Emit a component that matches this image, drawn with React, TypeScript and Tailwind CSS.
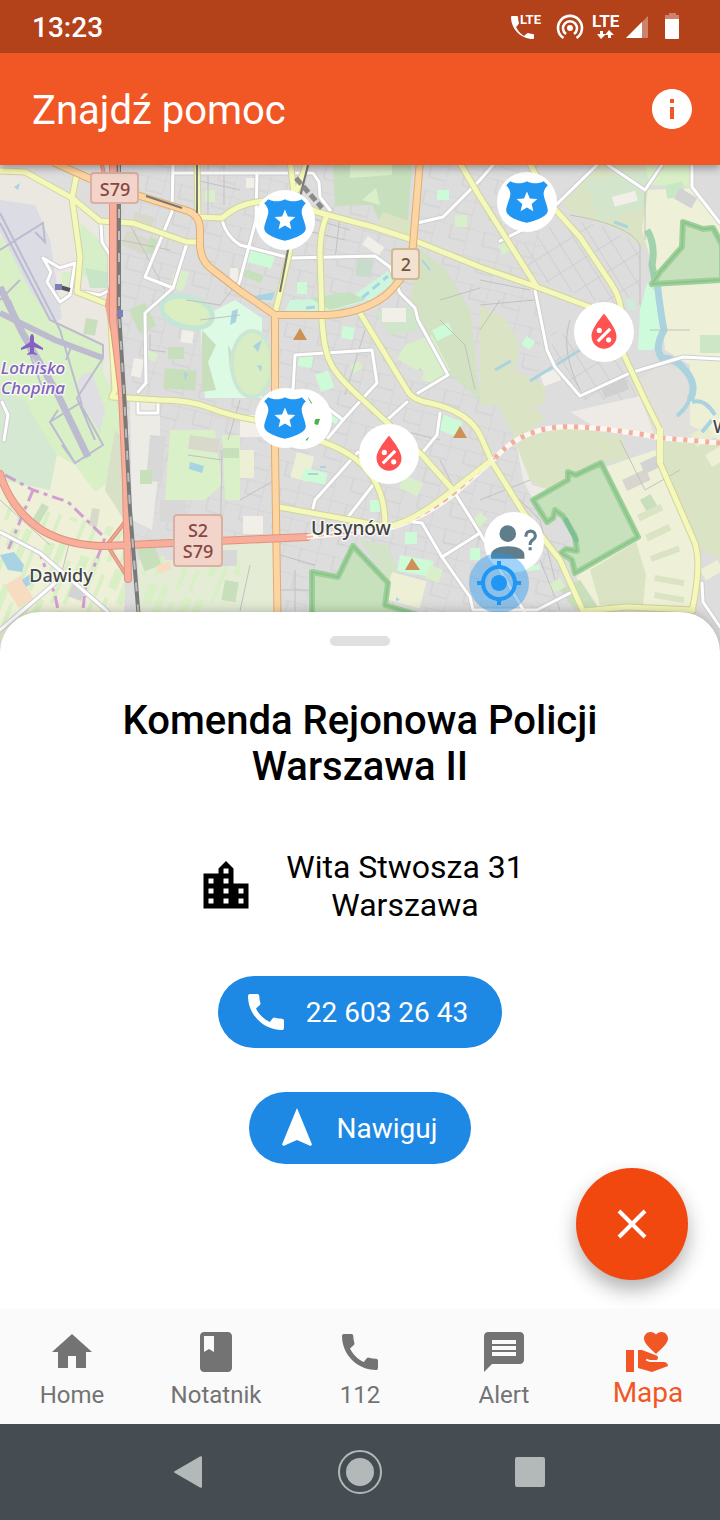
import React from 'react';
import {
  MdBook,
  MdCall,
  MdHome,
  MdInfo,
  MdLocationCity,
  MdMessage,
  MdNavigation,
  MdVolunteerActivism,
} from 'react-icons/md';
import { IconType } from 'react-icons';

// Road geometry, drawn as casing + fill
const WHITE_ROADS = [
  'M173 165L172 212L145 277L173 288L187 243',
  'M173 288L145 313L146 383L138 392',
  'M173 173H313L319 182L320 197L330 210',
  'M222 220Q226 236 240 245L290 258L375 256L390 267L400 293L415 308L418 320L448 375L418 393',
  'M101 223L102 242L110 255V290L100 295L83 292',
  'M43 258L60 268L75 263L70 295L60 302L47 282L51 272Z',
  'M257 173L256 220L240 280L236 292',
  'M417 223L443 217L480 180L493 165',
  'M293 390L295 355L372 350L377 383L363 398L343 420L328 438',
  'M597 165L558 203L522 230L500 241',
  'M608 165L645 190L662 165',
  'M692 165V187L720 223',
  'M535 290L547 350L555 367L580 396L630 373L683 357L720 359',
  'M313 508L315 500L358 452',
  'M348 517L373 485L387 475',
  'M387 420L407 402',
  'M343 420L320 402',
  'M440 413L437 435L422 453',
  'M413 522L422 523L442 557L470 597L473 610H537L570 593',
  'M453 490L480 533L442 557',
  'M480 533L500 570L524 611',
  'M0 532L40 553L107 611L130 640',
  'M55 583L0 630',
  'M702 583L703 602L720 627',
  'M2 402L8 415L4 440',
  'M138 402V413H158V402',
];

const YELLOW_ROADS = [
  'M0 171L25 172L72 198L100 221L133 223L187 242H200',
  'M77 173L72 198L80 257L77 292L110 305L115 390L112 397L160 400Q190 400 210 408T260 421L290 432Q330 442 350 455Q385 478 385 524',
  'M197 160L198 217L222 218Q238 204 257 202Q290 196 317 212L373 227L413 240L480 267L537 287L590 307',
  'M290 160L294 193L290 250L280 293L275 313',
  'M308 160L297 190',
  'M327 215Q320 230 320 253L322 320Q324 350 330 362Q336 376 363 400L422 455L453 490',
  'M360 313L407 390Q412 400 430 403Q470 412 481 437L492 462L523 512L560 560L583 611L595 640',
  'M387 527Q412 523 452 491L492 460',
  'M279 507L350 520L387 527',
  'M458 160L480 197L537 287',
  'M528 160L553 207L580 237L612 285Q622 300 622 320L623 353L645 400L660 430V463L695 543Q702 565 692 611',
  'M583 611L627 607L693 610',
];

const ORANGE_ROADS = [
  'M275 315L275 393L275 450L278 650',
  'M55 163L93 180L143 197L188 211Q199 215 200 228V246Q201 262 213 270L240 291L275 315H325Q360 314 385 296Q410 274 413 245L420 160',
];

const MOTORWAYS = [
  'M113 160V320L122 393L126 483L128 579',
  'M0 474Q11 510 43 531Q70 546 105 546L173 543L240 540L307 537',
];

const RESERVES = [
  'M533 500L568 480V472L576 475L601 463L638 537L575 573L572 560L561 553L566 549L577 551L575 536L563 516L555 510L553 518L547 522Z',
  'M312 660V572L338 577L353 546L388 583L385 605L425 617V660Z',
  'M683 222L703 229L713 228L722 245V280L652 284L660 272L682 247Z',
];

const TAXIWAYS =
  'M0 250L43 223L45 242L35 232M0 223L50 320L103 345V358L77 398L95 440M0 213L60 330L82 405M0 300L20 280M50 422L80 403L103 445L75 463ZM58 410L50 422M75 463L62 445M72 345L66 360M10 300L45 395';

// Small land use blocks: x, y, width, height, rotation, colour
const PATCHES: [number, number, number, number, number, string][] = [
  [150, 237, 12, 16, 20, '#c8dfbc'], [176, 268, 14, 20, 20, '#d9efc9'], [128, 230, 24, 16, 25, '#d8d9cb'],
  [135, 212, 20, 10, 15, '#d8d9cb'], [129, 310, 18, 26, -25, '#c8dfbc'], [168, 347, 16, 12, 0, '#c8dfbc'],
  [165, 368, 32, 20, 5, '#c8dfbc'], [134, 358, 10, 18, 10, '#f2efe9'], [182, 330, 12, 12, 8, '#f2efe9'],
  [147, 350, 12, 8, 20, '#d9efc9'], [205, 190, 10, 12, 0, '#d9efc9'], [230, 268, 8, 14, 0, '#f2efe9'],
  [246, 178, 10, 10, 0, '#f2efe9'], [250, 248, 26, 14, 16, '#cdfbd8'], [243, 268, 22, 8, 20, '#c8dfbc'],
  [297, 282, 10, 12, 0, '#cdfbd8'], [357, 258, 16, 18, 5, '#c8dccb'], [368, 236, 20, 10, 35, '#f2efe9'],
  [382, 308, 24, 14, 0, '#f2efe9'], [343, 326, 12, 12, 10, '#cdfbd8'], [300, 352, 14, 14, 10, '#cdfbd8'],
  [315, 375, 14, 18, -20, '#cdfbd8'], [350, 366, 10, 8, -30, '#d9efc9'], [432, 330, 18, 12, -25, '#cdfbd8'],
  [405, 345, 24, 16, 30, '#d9efc9'], [425, 370, 16, 10, 20, '#d9efc9'], [500, 215, 12, 10, -20, '#d9efc9'],
  [498, 246, 12, 10, -30, '#d9efc9'], [455, 215, 12, 12, 0, '#d9efc9'], [437, 190, 12, 10, 0, '#cdfbd8'],
  [527, 336, 10, 10, 35, '#cdfbd8'], [540, 375, 18, 12, -20, '#f2efe9'], [600, 300, 16, 8, 20, '#c8dfbc'],
  [627, 298, 8, 12, 0, '#cdebd8'], [600, 385, 26, 14, -20, '#d0d0d0'], [240, 415, 22, 22, 0, '#f2efe9'],
  [240, 450, 14, 28, 0, '#eef0d5'], [243, 516, 20, 18, 0, '#f2efe9'], [297, 452, 18, 26, 15, '#eef0d5'],
  [304, 468, 24, 12, 12, '#cdfbd8'], [330, 408, 14, 10, 35, '#cdfbd8'], [444, 415, 20, 16, 20, '#cdfbd8'],
  [405, 475, 20, 14, 25, '#d9efc9'], [370, 500, 10, 12, 0, '#cdfbd8'], [405, 532, 12, 12, 0, '#cdfbd8'],
  [400, 555, 34, 16, 10, '#cdfbd8'], [392, 572, 36, 28, 15, '#eef0d5'], [430, 565, 14, 14, 20, '#d9efc9'],
  [470, 548, 10, 12, 0, '#cdfbd8'], [480, 512, 10, 12, 40, '#d9efc9'], [548, 585, 14, 10, -30, '#d9efc9'],
  [500, 570, 40, 5, -8, '#cdfbd8'], [150, 435, 16, 46, 5, '#d8d8d8'], [190, 435, 30, 14, 8, '#d8d9cb'],
  [223, 448, 16, 10, 0, '#c8dfbc'], [140, 470, 12, 14, 0, '#c8dfbc'], [135, 545, 18, 28, -20, '#c8dfbc'],
  [160, 500, 26, 22, 0, '#d8d8d8'], [215, 550, 22, 16, 0, '#d8d8d8'], [225, 580, 14, 20, 10, '#c8dfbc'],
  [156, 566, 14, 8, -20, '#f8dcc2'], [42, 503, 8, 20, 30, '#c8dfbc'], [92, 508, 8, 18, 10, '#d8d9cb'],
  [5, 585, 18, 26, -30, '#f8dcc2'], [72, 585, 14, 12, 20, '#d3d3d3'], [640, 500, 12, 14, -30, '#c8dfbc'],
  [622, 480, 26, 12, -25, '#d8d5d0'], [640, 463, 18, 12, -25, '#d3d3d3'], [637, 515, 26, 7, -25, '#dae4c5'],
  [645, 535, 26, 7, -25, '#dae4c5'], [650, 556, 30, 6, -20, '#dae4c5'], [655, 575, 30, 6, 10, '#dae4c5'],
  [655, 592, 30, 6, 10, '#dae4c5'], [690, 435, 20, 14, -30, '#e8edcf'], [705, 455, 20, 14, -30, '#eef0d5'],
  [700, 570, 20, 12, -30, '#eef0d5'], [665, 185, 18, 14, -10, '#c9e6c5'], [700, 335, 20, 18, 0, '#cde6c5'],
  [680, 188, 20, 12, 30, '#d3d3d3'], [612, 197, 24, 10, -15, '#f2efe9'], [683, 262, 14, 10, 20, '#d4ecc0'],
  [86, 318, 12, 16, 10, '#c8dfbc'], [96, 178, 14, 14, 20, '#cfe8cf'], [62, 272, 10, 14, 0, '#d9efc9'],
];

const BLUE_WATER = [
  'M0 555L14 552L24 565L22 572L8 570Z', 'M22 580L30 574L34 582L26 587Z', 'M190 462L204 466L202 473L189 469Z',
  'M232 311L238 309L236 322L230 325Z', 'M14 187L20 183L18 190Z', 'M254 296L275 292L272 300L258 300Z',
  'M185 381L188 374L184 372', 'M253 346L262 340L258 352Z', 'M257 365L262 366L261 372Z', 'M396 597L400 600L396 601Z',
];

const Casing: React.FC<{ paths: string[]; edge: string; fill: string; width: number }> = ({ paths, edge, fill, width }) => (
  <g fill="none" strokeLinejoin="round" strokeLinecap="round">
    {paths.map((d) => <path key={`e${d}`} d={d} stroke={edge} strokeWidth={width + 2} />)}
    {paths.map((d) => <path key={d} d={d} stroke={fill} strokeWidth={width} />)}
  </g>
);

const POLICE_PATH =
  'M22 4L20 2C18.85 2.64 17.4 3 16 3C14.6 3 13.14 2.63 12 2C10.86 2.63 9.4 3 8 3C6.6 3 5.15 2.64 4 2L2 4C2 4 4 6 4 8S2 14 2 16C2 20 12 22 12 22S22 20 22 16C22 14 20 10 20 8S22 4 22 4M15.05 16.45L11.97 14.59L8.9 16.45L9.72 12.95L7 10.61L10.58 10.3L11.97 7L13.37 10.29L16.95 10.6L14.23 12.94L15.05 16.45Z';
const BLOOD_PATH =
  'M12 3.25C12 3.25 6 10 6 14C6 17.32 8.69 20 12 20A6 6 0 0 0 18 14C18 10 12 3.25 12 3.25M14.47 9.97L15.53 11.03L9.53 17.03L8.47 15.97M9.75 10A1.25 1.25 0 0 1 11 11.25A1.25 1.25 0 0 1 9.75 12.5A1.25 1.25 0 0 1 8.5 11.25A1.25 1.25 0 0 1 9.75 10M14.25 14.5A1.25 1.25 0 0 1 15.5 15.75A1.25 1.25 0 0 1 14.25 17A1.25 1.25 0 0 1 13 15.75A1.25 1.25 0 0 1 14.25 14.5Z';
const PERSON_PATH =
  'M13 8A4 4 0 0 1 9 12A4 4 0 0 1 5 8A4 4 0 0 1 9 4A4 4 0 0 1 13 8M17 18V20H1V18C1 15.58 4.58 14 9 14C13.42 14 17 15.58 17 18M20.5 14.5V16H19V14.5H20.5M18.5 9.5H17V9A3 3 0 0 1 20 6A3 3 0 0 1 23 9C23 9.97 22.5 10.88 21.71 11.41L21.41 11.6C20.84 12 20.5 12.61 20.5 13.3V13.5H19V13.3C19 12.11 19.6 11 20.59 10.35L20.88 10.16C21.27 9.9 21.5 9.47 21.5 9A1.5 1.5 0 0 0 20 7.5A1.5 1.5 0 0 0 18.5 9V9.5Z';
const LOCATE_PATH =
  'M12 8c-2.21 0-4 1.79-4 4s1.79 4 4 4 4-1.79 4-4-1.79-4-4-4zm8.94 3A8.994 8.994 0 0 0 13 3.06V1h-2v2.06A8.994 8.994 0 0 0 3.06 11H1v2h2.06A8.994 8.994 0 0 0 11 20.94V23h2v-2.06A8.994 8.994 0 0 0 20.94 13H23v-2h-2.06zM12 19c-3.87 0-7-3.13-7-7s3.13-7 7-7 7 3.13 7 7-3.13 7-7 7z';

interface PinProps {
  x: number;
  y: number;
  path: string;
  color: string;
  scale?: number;
  bg?: string;
}

const Pin: React.FC<PinProps> = ({ x, y, path, color, scale = 2.08, bg = '#fff' }) => (
  <g transform={`translate(${x} ${y})`}>
    <circle r="30" fill={bg} />
    <path transform={`scale(${scale}) translate(-12 -12)`} d={path} fill={color} fillRule="evenodd" />
  </g>
);

const CityMap: React.FC = () => (
  <svg
    className="block w-full h-[490px]"
    viewBox="0 165 720 490"
    preserveAspectRatio="xMidYMin slice"
    role="img"
    aria-label="Mapa"
    fontFamily='"Noto Sans", sans-serif'
  >
    <defs>
      <pattern id="streets" width="34" height="27" patternUnits="userSpaceOnUse" patternTransform="rotate(14)">
        <path d="M0 0H34M0 0V27M17 0V14M17 14H34" stroke="#cfcfcf" fill="none" />
      </pattern>
      <pattern id="blocks" width="15" height="24" patternUnits="userSpaceOnUse" patternTransform="rotate(-32)">
        <path d="M0 0H15M0 0V24" stroke="#c6c4c1" fill="none" />
      </pattern>
      <pattern id="fields" width="37" height="60" patternUnits="userSpaceOnUse" patternTransform="rotate(22)">
        <path d="M0 0H7V36H0ZM13 14H17V60H13ZM24 4H33V24H24ZM25 34H29V56H25Z" fill="#d9efc6" />
      </pattern>
    </defs>
    <rect y="165" width="720" height="500" fill="#dddddd" />
    <rect x="120" y="165" width="420" height="380" fill="url(#streets)" />
    <rect x="240" y="540" width="340" height="110" fill="url(#streets)" />
    <path d="M515 250L560 220L600 225L640 245V300L620 310L540 280Z" fill="url(#blocks)" />
    <path d="M550 330L620 350L640 400H585L555 365Z" fill="url(#blocks)" />

    {/* Airport and fields on the west side */}
    <path d="M0 165H60L72 198L110 225V400L60 340L0 300Z" fill="#ebe8e2" />
    <path d="M0 165H50L90 185L80 200L25 172L0 170Z" fill="#dedede" />
    <path d="M80 222L110 250V285L82 275Z" fill="#d7efc9" />
    <path d="M85 268L108 272V288H90Z" fill="#c9e5c8" />
    <path d="M0 235L60 325L104 346L103 372L125 420L124 520L0 480Z" fill="#d9f0c6" />
    <path d="M0 200L35 205L50 240L62 318L54 324L30 290L0 232Z" fill="#dcdce5" />
    <path d="M78 380Q90 365 94 378L105 410L100 432L80 400Z" fill="#dfdfe3" />
    <path d="M0 390L25 400L40 428L57 455L50 490L28 486L0 474Z" fill="#d4e8d2" />
    <path d="M57 455L75 465L95 492L112 480L125 510L124 650H0V480L50 490Z" fill="#eef0d8" />
    <path d="M0 500L125 530V650H0Z" fill="url(#fields)" />
    <path d="M115 430L124 440V520L105 490Z" fill="#d8e0c8" />
    <path d="M138 560H215V540H275V650H140Z" fill="#e4ecd6" />
    <path d="M138 550H240V650H140Z" fill="url(#fields)" />
    <path d="M130 400H160V460L152 530L132 520Z" fill="#ecebe6" />
    <path d="M170 430H215L222 485L205 500L165 500Z" fill="#d9f0c8" />
    <path d="M222 435H240V500H225Z" fill="#d9f0c8" />
    <path d="M200 318L235 300L262 318V398H205Z" fill="#ddfbe4" />
    <path d="M202 330L216 345L208 362L216 390L202 392ZM228 345L236 360L230 372Z" fill="#c8dfbc" />
    <ellipse cx="187" cy="312" rx="26" ry="15" transform="rotate(15 187 312)" fill="#dbeec2" stroke="#c3e6d6" strokeWidth="5" />
    <ellipse cx="252" cy="364" rx="20" ry="33" fill="#d9edc4" stroke="#cbe7d4" strokeWidth="4" />

    {/* Parks in the middle */}
    <path d="M333 165H412L407 232L380 222L372 205L335 206Z" fill="#c8dfbe" />
    <path d="M350 165H392V175L350 178ZM362 200L376 188L380 205Z" fill="#d9efc9" />
    <path d="M383 212L412 222V240L375 228Z" fill="#dae4c5" />
    <path d="M420 250L445 268L470 310L480 400L450 375L420 320L410 300Z" fill="#d3e2c3" />
    <path d="M290 300L350 298L392 268L398 280L370 300L330 311H285Z" fill="#cdf6dc" />
    <path d="M310 298L350 292L365 300L330 310Z" fill="#c4e2c0" />
    <path d="M362 298L388 276M306 308L325 306" stroke="#a9d3e6" strokeWidth="3" strokeDasharray="9 5" />
    <path d="M375 312L415 305L420 330L390 335Z" fill="#d0e5ca" />
    <path d="M405 345L432 335L450 370L432 385Z" fill="#d9efc9" />
    <path d="M360 540L388 545L398 572L388 583Z" fill="#d3e3c8" />

    {/* East side */}
    <path d="M560 200L598 165H648L645 250L625 232L570 212Z" fill="#dae4c5" />
    <path d="M585 180L650 170V205L600 222Z" fill="#d3e6cc" />
    <path d="M645 165H690L692 187L650 185Z" fill="#d9f0c6" />
    <path d="M648 190L690 188L720 225V365H690L665 350L658 285L642 230Z" fill="#eef0d8" />
    <path d="M690 165H720V215L700 195Z" fill="#dcdcdc" />
    <path d="M480 305L505 318L520 345L515 370L545 385V405H480Z" fill="#dae4c5" />
    <path d="M647 283L657 293L662 323L653 350L638 350L640 310Z" fill="#cdfbdc" />
    <path d="M632 385L660 365L690 370L692 400L700 440H655Z" fill="#e2e0dc" />
    <path d="M570 412L640 396L656 440L600 430Z" fill="#eeebe6" />
    <path d="M690 362H720V440L690 425Z" fill="#eef0d5" />
    <path d="M497 400L530 400L545 420L515 440Z" fill="#dae4c5" />
    <path d="M515 445Q540 426 575 428L622 436L628 460L601 463L545 490L530 480Z" fill="#dae4c5" />
    <path d="M517 447L532 485L550 490L533 500L523 480Z" fill="#eeebe6" />
    <path d="M663 442H720V560L702 550L664 465Z" fill="#dae4c5" />
    <path d="M605 467L655 450L697 548L692 611H590L575 573L638 537Z" fill="#eef0d8" />
    <path d="M590 570L636 542L646 575L643 605H600Z" fill="#dae4c5" />
    <path d="M560 590L580 580L600 610H575Z" fill="#c8dfbc" />

    {PATCHES.map(([x, y, w, h, r, fill]) => (
      <rect key={`${x}-${y}`} x={x} y={y} width={w} height={h} fill={fill} transform={`rotate(${r} ${x} ${y})`} />
    ))}
    {BLUE_WATER.map((d) => <path key={d} d={d} fill="#a7d3e2" />)}
    <g fill="none" stroke="#aad3df">
      <path d="M656 272Q660 310 664 330Q654 348 662 358Q676 358 685 370Q698 385 690 400" strokeWidth="7" />
      <path d="M690 395Q690 405 677 416M692 402Q705 398 715 415M702 432L712 420" strokeWidth="4" />
      <path d="M530 381L580 350M495 370L511 361M614 222L628 227" strokeWidth="3" />
      <path d="M308 474H318M320 467H326M422 260L430 270" strokeWidth="2" />
    </g>
    <path d="M647 230Q656 245 652 265L656 285" fill="none" stroke="#8fcaa0" strokeWidth="7" opacity=".8" />
    {RESERVES.map((d) => (
      <g key={d} strokeLinejoin="round">
        <path d={d} fill="#c7e1bc" stroke="#9fd09b" strokeWidth="6" />
        <path d={d} fill="none" stroke="#8cc58a" strokeWidth="2" />
      </g>
    ))}
    <path d="M566 520L576 540" stroke="#7fbf96" strokeWidth="5" strokeLinecap="round" />

    {/* Minor grey streets */}
    <g fill="none" stroke="#c2c1bf">
      <path d="M186 300L220 305L240 280M150 334V350L166 352M240 400L228 440M222 450L220 560M160 540H275M188 455L222 460M240 500L275 480" />
      <path d="M250 565L240 611M280 555L315 565M280 590H310M295 570V611M440 300L480 288M440 320L465 345L475 390M365 330L345 395" />
      <path d="M480 280L530 290M480 305L535 300M570 215Q630 225 640 245V305M645 190V240M650 330H690M480 330L500 300M570 320Q560 350 580 390" />
      <path d="M620 440L645 490L680 470M500 480L540 520L555 580M480 500L530 480M440 460L480 540M400 430L440 440M530 540L570 560M540 560L560 610M70 540L60 580M0 500L50 545" />
      <path d="M120 240L170 250M130 225L165 290M200 320L240 315M195 180L240 190M208 165V215M224 165V205M340 215L335 260M300 215L350 230M303 230L345 240" />
    </g>

    <path d={TAXIWAYS} fill="none" stroke="#bcbbd0" strokeWidth="2" />
    <path d="M0 287L22 332L57 393L88 457" fill="none" stroke="#bcbbd0" strokeWidth="7" />
    <path d="M0 313L55 340L103 358" fill="none" stroke="#bcbbd0" strokeWidth="6" />
    <path d="M5 475L33 490L68 502L105 538L85 590L82 620M33 490L8 550M12 537L40 553L55 595L60 620" fill="none" stroke="#cb92cf" strokeWidth="3" strokeDasharray="12 5 4 5" opacity=".85" />

    <Casing paths={WHITE_ROADS} edge="#cfcfcf" fill="#ffffff" width={3} />
    <Casing paths={YELLOW_ROADS} edge="#d2d49c" fill="#f5f8bb" width={5} />
    <Casing paths={ORANGE_ROADS} edge="#dfae72" fill="#fcd5a2" width={6} />
    <Casing paths={['M125 522L107 545L128 578M102 165L110 200']} edge="#dc8f7c" fill="#f4a692" width={2} />
    <path d="M112 285L108 305L113 330" fill="none" stroke="#f0a590" strokeWidth="6" />
    <Casing paths={MOTORWAYS} edge="#df937f" fill="#f8ae9a" width={6} />

    {/* Railways */}
    <g fill="none">
      <path d="M119 165V313L124 393L130 510L139 620" stroke="#7a7a7a" strokeWidth="4" />
      <path d="M119 165V313L124 393L130 510L139 620" stroke="#bdbdbd" strokeWidth="2" strokeDasharray="9 13" />
      <path d="M197 165V213M308 165L300 197L288 250L280 292M146 196L182 208" stroke="#777" strokeWidth="2" />
      <path d="M296 178L322 208" stroke="#8a8a8a" strokeWidth="5" strokeDasharray="8 3" />
      <path d="M56 286L70 290" stroke="#555" strokeWidth="4" />
    </g>
    <rect x="55" y="284" width="7" height="6" fill="#7a80b8" />
    <rect x="117" y="310" width="6" height="7" fill="#7a80b8" />

    {/* Tunnel */}
    <path d="M307 537L387 529Q420 520 453 495L495 458Q520 430 560 427Q590 425 663 438L720 443" fill="none" stroke="#fdf6f0" strokeWidth="5" />
    <path d="M307 537L387 529Q420 520 453 495L495 458" fill="none" stroke="#efb3a0" strokeWidth="2" strokeDasharray="6 5" />
    <path d="M495 458Q520 430 560 427Q590 425 663 438L720 443" fill="none" stroke="#f3ad9b" strokeWidth="5" strokeDasharray="4 7" />
    <path d="M660 428V463" stroke="#f5f8bb" strokeWidth="6" />
    <path d="M387 527Q412 523 452 491L492 460" fill="none" stroke="#f5f8bb" strokeWidth="5" />

    {/* Peaks */}
    <path d="M293 340H307L300 328ZM453 438H467L460 426ZM405 570H420L412 558Z" fill="#d08f56" />

    <path
      d="M32 334c-1 0-2 2-2 4v4l-9 6v2l9-3v5l-3 2v1l5-1 5 1v-1l-3-2v-5l9 3v-2l-9-6v-4c0-2-1-4-2-4z"
      fill="#8562c2"
    />
    <g stroke="#fff" strokeOpacity=".7" strokeWidth="3" paintOrder="stroke" strokeLinejoin="round">
      <g fill="#8461bd" fontSize="17" fontWeight="500" fontStyle="italic" textAnchor="middle">
        <text x="33" y="374">Lotnisko</text>
        <text x="33" y="394">Chopina</text>
      </g>
      <g fill="#444" fontSize="18" fontWeight="500">
        <text x="351" y="535" fontSize="19" textAnchor="middle">Ursynów</text>
        <text x="61" y="582" textAnchor="middle">Dawidy</text>
        <text x="713" y="433">W</text>
      </g>
    </g>

    {/* Road shields */}
    <g strokeWidth="2" fill="#f2d4cb" stroke="#dbb0a3">
      <rect x="91" y="173" width="47" height="30" rx="3" />
      <rect x="174" y="515" width="48" height="51" rx="3" />
      <rect x="392" y="249" width="27" height="30" rx="3" fill="#f2e2cf" stroke="#d2b893" />
    </g>
    <g fontSize="18" fontWeight="500" textAnchor="middle" fill="#86473f">
      <text x="115" y="196">S79</text>
      <text x="198" y="537">S2</text>
      <text x="198" y="558">S79</text>
      <text x="406" y="271" fill="#6f573a">2</text>
    </g>

    <circle cx="302" cy="419" r="30" fill="#fff" />
    <path d="M308 397L312 403L310 405ZM314 420Q318 418 320 419L318 425L314 424ZM305 439L309 437L307 441Z" fill="#4caf50" />
    <Pin x={285} y={220} path={POLICE_PATH} color="#2196f3" />
    <Pin x={527} y={202} path={POLICE_PATH} color="#2196f3" />
    <Pin x={285} y={418} path={POLICE_PATH} color="#2196f3" />
    <Pin x={604} y={332} path={BLOOD_PATH} color="#ff5252" />
    <Pin x={389} y={454} path={BLOOD_PATH} color="#ff5252" />
    <Pin x={514} y={542} path={PERSON_PATH} color="#607d8b" />
    <Pin x={499} y={583} path={LOCATE_PATH} color="#2196f3" scale={2} bg="rgba(33,150,243,.42)" />
  </svg>
);

const StatusBar: React.FC = () => (
  <div className="relative z-20 h-[53px] shrink-0 bg-[#b3411a] text-white flex items-center justify-between pl-8 pr-10">
    <span className="pt-0.5 text-[28px] leading-8 font-medium">13:23</span>
    <svg
      className="font-[Roboto,sans-serif] font-bold"
      width="170"
      height="32"
      viewBox="510 11 170 32"
      fill="#fff"
      aria-hidden="true"
    >
      <path d="M512 16h5q1 0 1 1 0 3 1 6 0 1-3 4 3 6 8 9 3-3 4-3 3 1 5 1 1 0 1 1v3q0 1-1 1C521 39 511 29 511 17q0-1 1-1z" />
      <text x="520" y="24" fontSize="13">LTE</text>
      <g fill="none" stroke="#fff" strokeWidth="2.6">
        <path d="M563.5 38A12 12 0 1 1 576.5 38" />
        <path d="M566 34A7 7 0 1 1 574 34" />
      </g>
      <circle cx="570" cy="28" r="3" />
      <text x="592" y="27" fontSize="17">LTE</text>
      <path d="M600 31h3v3h3l-5 5-4-5h3zM608 38h3v-3h3l-5-5-4 5h3z" />
      <path d="M648 16V38H626Z" fillOpacity=".35" />
      <path d="M642 22V38H626Z" />
      <path d="M665 19V15h4v-2h7v2h3v4z" fillOpacity=".35" />
      <path d="M665 19h14v19q0 1-1 1h-12q-1 0-1-1z" />
    </svg>
  </div>
);

interface NavItem {
  label: string;
  Icon: IconType;
  active?: boolean;
}

const NAV_ITEMS: NavItem[] = [
  { label: 'Home', Icon: MdHome },
  { label: 'Notatnik', Icon: MdBook },
  { label: '112', Icon: MdCall },
  { label: 'Alert', Icon: MdMessage },
  { label: 'Mapa', Icon: MdVolunteerActivism, active: true },
];

const BottomNav: React.FC = () => (
  <nav className="relative h-[114px] shrink-0 bg-[#fafafa] grid grid-cols-5 shadow-[0_-1px_2px_rgba(0,0,0,0.03)]">
    {NAV_ITEMS.map(({ label, Icon, active }) => (
      <a
        key={label}
        href={`#${label.toLowerCase()}`}
        className={`flex flex-col items-center pt-[18px] ${active ? 'text-[#f15725]' : 'text-[#737373]'}`}
      >
        <Icon size={48} />
        <span className={active ? 'text-[28px] leading-[34px]' : 'text-2xl leading-[38px]'}>{label}</span>
      </a>
    ))}
  </nav>
);

const SystemBar: React.FC = () => (
  <div className="h-24 shrink-0 bg-[#454d53] text-[#b3b8b9] flex items-center justify-center gap-32">
    <button aria-label="Back">
      <svg width="44" height="44" viewBox="0 0 44 44" fill="currentColor">
        <path d="M34 6.5q2-1 2 1v29q0 2-2 1L9 23q-2-1 0-2z" />
      </svg>
    </button>
    <button aria-label="Home screen">
      <svg width="44" height="44" viewBox="0 0 44 44" fill="currentColor">
        <circle cx="22" cy="22" r="21" fill="none" stroke="currentColor" strokeWidth="2" />
        <circle cx="22" cy="22" r="14" />
      </svg>
    </button>
    <button aria-label="Recent apps">
      <svg width="44" height="44" viewBox="0 0 44 44" fill="currentColor">
        <rect x="5" y="7" width="30" height="30" rx="2" />
      </svg>
    </button>
  </div>
);

const App: React.FC = () => {
  return (
    <div className="min-h-screen flex flex-col bg-white font-[Roboto,sans-serif]">
      <StatusBar />
      <header className="relative z-10 h-28 shrink-0 bg-[#f15725] text-white flex items-center justify-between pl-8 pr-7 shadow-[0_3px_8px_rgba(0,0,0,0.35)]">
        <h1 className="pt-1 text-[40px] leading-[46px]">Znajdź pomoc</h1>
        <button aria-label="Informacje" className="-m-1">
          <MdInfo size={48} />
        </button>
      </header>

      <CityMap />

      {/* Bottom sheet */}
      <main className="relative grow -mt-[43px] pt-6 pb-16 bg-white rounded-t-[40px] shadow-[0_0_12px_rgba(0,0,0,0.25)] flex flex-col items-center text-black">
        <div className="w-15 h-[10px] rounded-full bg-[#e0e0e0]"></div>
        <h2 className="mt-[52px] max-w-[560px] text-center text-[40px] leading-[46px] font-medium">
          Komenda Rejonowa Policji Warszawa II
        </h2>
        <div className="mt-[58px] flex items-center gap-[30px]">
          <MdLocationCity size={60} />
          <address className="not-italic text-center text-[32px] leading-[38px]">
            Wita Stwosza 31
            <br />
            Warszawa
          </address>
        </div>
        <a href="tel:226032643" className="mt-[52px] h-[72px] pl-6 pr-[34px] rounded-full bg-[#1e88e5] text-white text-[28px] flex items-center gap-4">
          <MdCall size={48} />
          <span className="pt-0.5">22 603 26 43</span>
        </a>
        <button className="mt-11 h-[72px] pl-6 pr-[34px] rounded-full bg-[#1e88e5] text-white text-[28px] flex items-center gap-4">
          <MdNavigation size={48} />
          <span className="pt-0.5">Nawiguj</span>
        </button>
        <button
          aria-label="Zamknij"
          className="absolute right-8 bottom-[30px] w-28 h-28 rounded-full bg-[#f1480f] text-white flex items-center justify-center shadow-[0_10px_20px_rgba(0,0,0,0.3)]"
        >
          <svg width="32" height="32" viewBox="0 0 32 32" fill="none" stroke="currentColor" strokeWidth="4">
            <path d="M3 3L29 29M29 3L3 29" />
          </svg>
        </button>
      </main>

      <BottomNav />
      <SystemBar />
    </div>
  );
};

export default App;
